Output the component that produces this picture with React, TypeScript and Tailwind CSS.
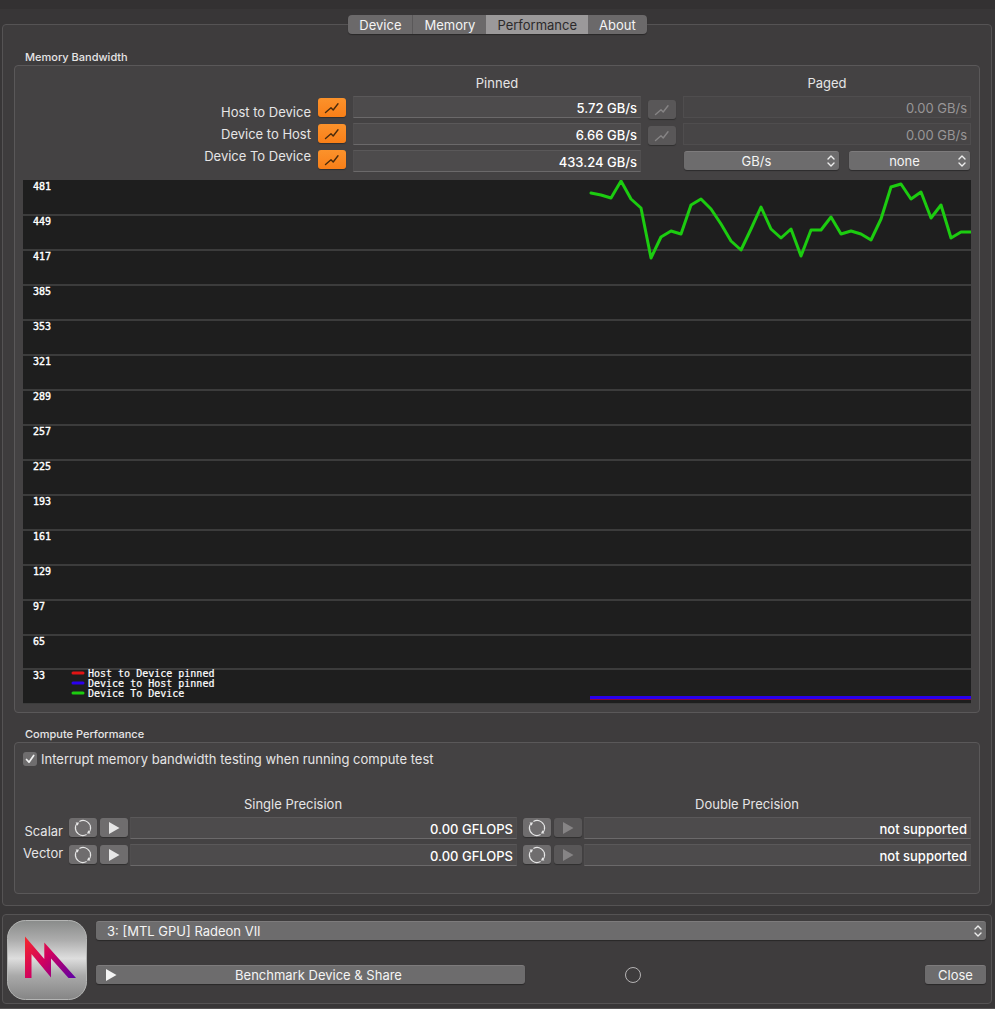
import React, { useState } from "react";
import clsx from "clsx";

type Option = { value: string; label: string };

const tabs = ["Device", "Memory", "Performance", "About"];

const deviceToDevice = [
	13, 15, 18, 1, 19, 28, 78, 57, 51, 54, 25, 19, 29, 44, 61, 70, 49, 27, 49, 58,
	49, 76, 50, 50, 37, 54, 51, 54, 60, 39, 7, 4, 19, 12, 38, 25, 58, 52, 52,
];

const axis = [
	481, 449, 417, 385, 353, 321, 289, 257, 225, 193, 161, 129, 97, 65, 33,
];

const legend = [
	{ name: "Host to Device pinned", color: "#e01414" },
	{ name: "Device to Host pinned", color: "#2a00ee" },
	{ name: "Device To Device", color: "#1ccc10" },
];

// distance between two grid lines
const STEP = 34.925;

const TrendIcon = () => (
	<svg width="16" height="12" viewBox="0 0 16 12" fill="none" aria-hidden="true">
		<path
			d="M1.5 10.5 7 5.8l2.2 2.2L14 1.8"
			stroke="currentColor"
			strokeWidth="1.4"
			strokeLinecap="round"
			strokeLinejoin="round"
		/>
	</svg>
);

const LoopIcon = () => (
	<svg width="18" height="18" viewBox="0 0 18 18" fill="none" aria-hidden="true">
		<path
			d="M5.4 2.4A7.4 7.4 0 0 1 16.3 10.2M12.6 15.6A7.4 7.4 0 0 1 1.7 7.8M1.7 11.2A7.4 7.4 0 0 1 2.6 5M16.3 6.8A7.4 7.4 0 0 1 15.4 13"
			stroke="currentColor"
			strokeWidth="1.1"
		/>
		<path d="M1.6 3.4 5 3.6 3.6 6.8zM16.4 14.6 13 14.4l1.4-3.2z" fill="currentColor" />
	</svg>
);

const PlayIcon = () => (
	<svg width="12" height="12" viewBox="0 0 12 12" aria-hidden="true">
		<path d="M1 0v12L11.5 6z" fill="currentColor" />
	</svg>
);

const IconButton = ({
	label,
	tone = "gray",
	disabled = false,
	children,
}: {
	label: string;
	tone?: "gray" | "orange";
	disabled?: boolean;
	children: React.ReactNode;
}) => (
	<button
		type="button"
		aria-label={label}
		disabled={disabled}
		className={clsx(
			"flex h-[19px] w-7 shrink-0 items-center justify-center rounded-[3px] shadow-[0_1px_1px_rgba(0,0,0,0.3)]",
			tone === "orange" && "bg-linear-to-b from-[#fb922b] to-[#f97f17] text-[#4a2b0c]",
			tone === "gray" && !disabled && "bg-[#6f6d6e] text-[#e6e6e6]",
			tone === "gray" && disabled && "bg-[#595758] text-[#868485]"
		)}
	>
		{children}
	</button>
);

const ValueField = ({
	label,
	value,
	muted = false,
}: {
	label: string;
	value: string;
	muted?: boolean;
}) => (
	<input
		type="text"
		readOnly
		aria-label={label}
		value={value}
		className={clsx(
			"block h-[22px] w-full min-w-0 border pt-0.5 pr-[3px] text-right outline-none",
			muted
				? "border-[#4f4d4e] bg-[#474546] text-[#989697]"
				: "border-x-[#504e4f] border-t-[#5a5859] border-b-[#6b696a] bg-[#4d4b4c] font-medium text-white"
		)}
	/>
);

const PopUp = ({
	label,
	options,
	className,
	align = "center",
}: {
	label: string;
	options: Option[];
	className?: string;
	align?: "center" | "left";
}) => (
	<div className={clsx("relative", className)}>
		<select
			aria-label={label}
			className={clsx(
				"block h-[19px] w-full appearance-none rounded-[3px] border-t border-[#7d7b7c] bg-[#6d6c6d] text-[#f4f4f4] shadow-[0_1px_1px_rgba(0,0,0,0.35)] outline-none",
				align === "center" ? "pr-2.5 [text-align-last:center]" : "pl-[11px]"
			)}
		>
			{options.map((option) => (
				<option key={option.value} value={option.value}>
					{option.label}
				</option>
			))}
		</select>
		<svg
			className="pointer-events-none absolute top-1 right-1"
			width="8"
			height="12"
			viewBox="0 0 8 12"
			fill="none"
			aria-hidden="true"
		>
			<path
				d="M1 4 4 1l3 3M1 8l3 3 3-3"
				stroke="#ededed"
				strokeWidth="1.4"
				strokeLinecap="round"
				strokeLinejoin="round"
			/>
		</svg>
	</div>
);

const BandwidthChart = () => {
	const points = deviceToDevice.map((y, i) => `${568 + i * 10},${y}`).join(" ");

	return (
		<svg
			viewBox="0 0 948 524"
			className="mt-2 block w-full bg-[#1e1e1e] font-['DejaVu_Sans_Mono',monospace] text-[10px]"
			role="img"
			aria-label="Memory bandwidth over time"
		>
			{axis.map((value, i) => (
				<g key={value}>
					<rect
						x="0"
						y={Math.ceil((i + 1) * STEP) - 1}
						width="948"
						height="2"
						fill="#3c3c3c"
					/>
					<text
						x="10"
						y={Math.ceil(i * STEP) + 10}
						fill="#fff"
						stroke="#fff"
						strokeWidth="0.4"
					>
						{value}
					</text>
				</g>
			))}
			{legend.map((item, i) => (
				<g key={item.name}>
					<path
						d={`M50 ${493 + i * 10}h10`}
						stroke={item.color}
						strokeWidth="3"
						strokeLinecap="round"
					/>
					<text
						x="65"
						y={497 + i * 10}
						fill="#fff"
						stroke="#fff"
						strokeWidth="0.2"
					>
						{item.name}
					</text>
				</g>
			))}
			<path d="M567 519h381" stroke="#b3102a" strokeWidth="2" />
			<path d="M567 517.5h381" stroke="#2a00ee" strokeWidth="3" />
			<path d="M567 519.5h381" stroke="#8c0a3c" strokeWidth="1" />
			<polyline
				points={points}
				fill="none"
				stroke="#1ccc10"
				strokeWidth="3"
				strokeLinejoin="round"
				strokeLinecap="round"
			/>
		</svg>
	);
};

const MetalLogo = () => (
	<svg width="80" height="80" viewBox="0 0 80 80" className="shrink-0" role="img" aria-label="Metal">
		<defs>
			<linearGradient id="plate" x1="0" y1="0" x2="0" y2="1">
				<stop offset="0" stopColor="#898b8a" />
				<stop offset="0.25" stopColor="#adadad" />
				<stop offset="0.48" stopColor="#dedede" />
				<stop offset="0.7" stopColor="#a9a9a9" />
				<stop offset="1" stopColor="#858585" />
			</linearGradient>
			<linearGradient id="mark" x1="18" y1="18" x2="68" y2="60" gradientUnits="userSpaceOnUse">
				<stop offset="0" stopColor="#f5272c" />
				<stop offset="0.45" stopColor="#cf0060" />
				<stop offset="1" stopColor="#5a00a8" />
			</linearGradient>
		</defs>
		<rect x="0.5" y="0.5" width="79" height="79" rx="18" fill="url(#plate)" stroke="#b4b5b4" />
		<path
			d="M18 16.5 37.3 39V22.5L69 58h-7.5L44 38.5V57.5L24.5 34v24H18z"
			fill="url(#mark)"
		/>
	</svg>
);

const ComputeColumn = ({
	title,
	value,
	disabled = false,
}: {
	title: string;
	value: string;
	disabled?: boolean;
}) => (
	<div>
		<h3 className="mb-1 text-center leading-[18px]">{title}</h3>
		<div className="flex flex-col gap-[5px]">
			{["Scalar", "Vector"].map((row) => (
				<div key={row} className="flex items-start">
					<div className="flex gap-[3px] pt-px pr-0.5">
						<IconButton label={`Loop ${row} ${title}`}>
							<LoopIcon />
						</IconButton>
						<IconButton label={`Run ${row} ${title}`} disabled={disabled}>
							<PlayIcon />
						</IconButton>
					</div>
					<ValueField label={`${row} ${title}`} value={value} />
				</div>
			))}
		</div>
	</div>
);

const App = () => {
	const [active, setActive] = useState("Performance");
	const [interrupt, setInterrupt] = useState(true);

	return (
		<div className="min-h-screen border-t-[9px] border-[#333132] bg-[#383637] pt-1.5 font-[Inter,sans-serif] text-[13px] leading-[18px] text-[#e6e5e6]">
			<nav role="tablist" className="relative z-10 flex justify-center">
				<div className="flex overflow-hidden rounded-[4px] bg-[#6b696a] shadow-[0_1px_1px_rgba(0,0,0,0.35)]">
					{tabs.map((tab) => (
						<button
							key={tab}
							type="button"
							role="tab"
							aria-selected={active === tab}
							onClick={() => setActive(tab)}
							className={clsx(
								"h-[19px] px-[11px]",
								active === tab ? "bg-[#9b999a] text-[#2c2a2b]" : "text-[#f4f4f4]",
								tab === "Device" && "border-r border-[#5a5859]"
							)}
						>
							{tab}
						</button>
					))}
				</div>
			</nav>

			<main className="mr-[3px] -mt-2.5 ml-0.5 rounded-[4px] border border-[#555354] bg-[#3e3c3d] px-[11px] pt-6 pb-[11px]">
				<section>
					<h2 className="pl-[11px] text-[11px] leading-4 font-medium">Memory Bandwidth</h2>
					<div className="rounded-[4px] border border-[#5a5859] bg-[#444243] p-2">
						<div className="grid grid-cols-[1fr_28px_1fr_28px_1fr] gap-x-[7px]">
							<div className="flex flex-col pt-[27px] text-right leading-[22px]">
								<span>Host to Device</span>
								<span>Device to Host</span>
								<span>Device To Device</span>
							</div>
							<div className="flex flex-col gap-[7px] pt-6">
								{["Host to Device", "Device to Host", "Device To Device"].map((name) => (
									<IconButton key={name} label={`Plot ${name} pinned`} tone="orange">
										<TrendIcon />
									</IconButton>
								))}
							</div>
							<div className="flex flex-col gap-[5px]">
								<h3 className="-mb-px text-center">Pinned</h3>
								<ValueField label="Host to Device pinned" value="5.72 GB/s" />
								<ValueField label="Device to Host pinned" value="6.66 GB/s" />
								<ValueField label="Device To Device" value="433.24 GB/s" />
							</div>
							<div className="flex flex-col gap-[7px] pt-[26px]">
								<IconButton label="Plot Host to Device paged" disabled>
									<TrendIcon />
								</IconButton>
								<IconButton label="Plot Device to Host paged" disabled>
									<TrendIcon />
								</IconButton>
							</div>
							<div className="flex flex-col gap-[5px]">
								<h3 className="-mb-px text-center">Paged</h3>
								<ValueField label="Host to Device paged" value="0.00 GB/s" muted />
								<ValueField label="Device to Host paged" value="0.00 GB/s" muted />
								<div className="flex gap-2.5 px-px pt-px">
									<PopUp
										label="Unit"
										className="flex-[155]"
										options={[{ value: "gbs", label: "GB/s" }]}
									/>
									<PopUp
										label="Smoothing"
										className="flex-[121]"
										options={[{ value: "none", label: "none" }]}
									/>
								</div>
							</div>
						</div>
						<BandwidthChart />
					</div>
				</section>

				<section className="mt-[13px]">
					<h2 className="pl-[11px] text-[11px] leading-4 font-medium">Compute Performance</h2>
					<div className="rounded-[4px] border border-[#5a5859] bg-[#444243] px-2 pt-[7px] pb-[27px]">
						<label className="flex items-center gap-1">
							<input
								type="checkbox"
								checked={interrupt}
								onChange={(e) => setInterrupt(e.target.checked)}
								className="peer size-3.5 appearance-none rounded-[3px] bg-[#6f6d6e]"
							/>
							<svg
								className="pointer-events-none -ml-[18px] hidden size-3.5 peer-checked:block"
								viewBox="0 0 14 14"
								fill="none"
								aria-hidden="true"
							>
								<path
									d="M3.5 7.5 6 10.2l4.7-6.7"
									stroke="#f2f2f2"
									strokeWidth="1.7"
									strokeLinecap="round"
									strokeLinejoin="round"
								/>
							</svg>
							Interrupt memory bandwidth testing when running compute test
						</label>
						<div className="mt-[27px] grid grid-cols-[40px_1fr_1fr] gap-x-1.5">
							<div className="flex flex-col pt-[25px] text-right leading-[22px]">
								<span>Scalar</span>
								<span>Vector</span>
							</div>
							<ComputeColumn title="Single Precision" value="0.00 GFLOPS" />
							<ComputeColumn title="Double Precision" value="not supported" disabled />
						</div>
					</div>
				</section>
			</main>

			<footer className="mt-2 mr-[3px] mb-1 ml-0.5 flex gap-[9px] rounded-[4px] border border-[#555354] bg-[#3e3c3d] pt-[5px] pr-[5px] pb-[3px] pl-1">
				<MetalLogo />
				<div className="flex min-w-0 flex-1 flex-col gap-[25px] pt-px">
					<PopUp
						label="Compute device"
						align="left"
						options={[{ value: "3", label: "3: [MTL GPU] Radeon VII" }]}
					/>
					<div className="grid grid-cols-[1fr_216px_245px] items-center">
						<button
							type="button"
							className="relative h-[19px] rounded-[3px] border-t border-[#7d7b7c] bg-[#6d6c6d] pl-4 text-[#f4f4f4] shadow-[0_1px_1px_rgba(0,0,0,0.35)]"
						>
							<span className="absolute top-[3px] left-[9px]">
								<PlayIcon />
							</span>
							Benchmark Device & Share
						</button>
						<svg
							className="justify-self-center"
							width="18"
							height="18"
							viewBox="0 0 18 18"
							fill="none"
							aria-hidden="true"
						>
							<circle cx="9" cy="9" r="7.5" stroke="#b5b3b4" />
						</svg>
						<button
							type="button"
							className="h-[19px] w-[61px] justify-self-end rounded-[3px] border-t border-[#7d7b7c] bg-[#6d6c6d] text-[#f4f4f4] shadow-[0_1px_1px_rgba(0,0,0,0.35)]"
						>
							Close
						</button>
					</div>
				</div>
			</footer>
			<div className="h-px bg-[#555354]" />
		</div>
	);
};

export default App;
